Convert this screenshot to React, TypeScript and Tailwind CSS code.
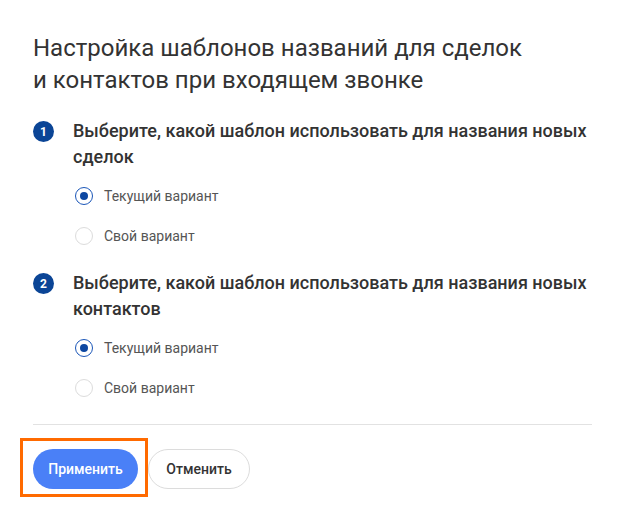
import { useState } from "react";

const sections = [
  { n: 1, title: "Выберите, какой шаблон использовать для названия новых сделок" },
  { n: 2, title: "Выберите, какой шаблон использовать для названия новых контактов" },
];

function Radio({ checked, label, onClick }: { checked: boolean; label: string; onClick: () => void }) {
  return (
    <button onClick={onClick} className="flex items-center h-10 ml-[42px] gap-[11px] text-left">
      <span
        className={`w-[18px] h-[18px] rounded-full border flex items-center justify-center ${
          checked ? "border-[#1a56b8] border-[1.5px]" : "border-[#dcdcdc]"
        }`}
      >
        {checked && <span className="w-[8px] h-[8px] rounded-full bg-[#0d47a1]" />}
      </span>
      <span className="text-[14px] text-[#555]">{label}</span>
    </button>
  );
}

export default function App() {
  const [picked, setPicked] = useState<Record<number, string>>({ 1: "cur", 2: "cur" });

  return (
    <div className="w-[624px] h-[521px] bg-white pl-[33px] pr-[32px] pt-[32px] font-['Roboto',sans-serif]">
      <h1 className="text-[24px] leading-[32px] text-[#333] max-w-[500px]">
        Настройка шаблонов названий для сделок и контактов при входящем звонке
      </h1>

      <div className="mt-[22px]">
        {sections.map((s, i) => (
          <div key={s.n} className={i > 0 ? "mt-[14px]" : ""}>
            <div className="flex gap-[19px]">
              <span className="w-[21px] h-[21px] mt-[3px] shrink-0 rounded-full bg-[#0b4596] text-white text-[12px] font-bold flex items-center justify-center">
                {s.n}
              </span>
              <p className="text-[18px] leading-[26px] font-medium text-[#333]">{s.title}</p>
            </div>
            <div className="mt-[6px]">
              <Radio
                checked={picked[s.n] === "cur"}
                label="Текущий вариант"
                onClick={() => setPicked({ ...picked, [s.n]: "cur" })}
              />
              <Radio
                checked={picked[s.n] === "own"}
                label="Свой вариант"
                onClick={() => setPicked({ ...picked, [s.n]: "own" })}
              />
            </div>
          </div>
        ))}
      </div>

      <div className="mt-[16px] border-t border-[#e2e2e2]" />

      <div className="relative flex gap-[10px] mt-[24px]">
        <div className="absolute left-[-13px] top-[-11px] w-[128px] h-[59px] border-[3px] border-[#ff6a00]" />
        <button className="h-10 w-[105px] rounded-full bg-[#4a80f7] text-white text-[14px] font-medium">
          Применить
        </button>
        <button className="h-10 w-[102px] rounded-full border border-[#dcdcdc] bg-white text-[#333] text-[14px] font-medium">
          Отменить
        </button>
      </div>
    </div>
  );
}
